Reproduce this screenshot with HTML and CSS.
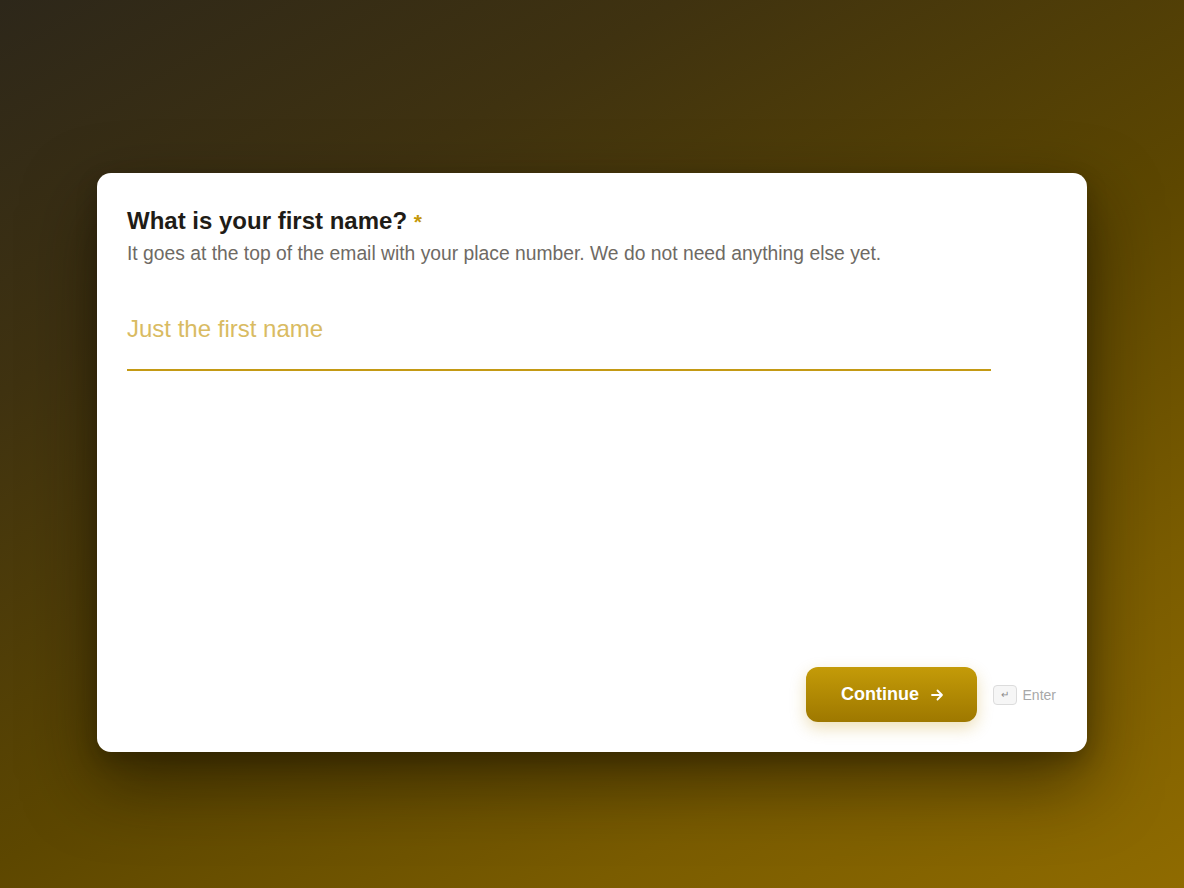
FILE: index.html
```html
<!DOCTYPE html>
<html lang="en">
<head>
<meta charset="utf-8">
<title>First name</title>
<link rel="stylesheet" href="styles.css">
</head>
<body>
<main class="stage">
  <section class="card">
    <div class="question">
      <h1 class="title">What is your first name? <span class="req">*</span></h1>
      <p class="desc">It goes at the top of the email with your place number. We do not need anything else yet.</p>
      <div class="field">
        <input class="input" type="text" placeholder="Just the first name">
      </div>
    </div>
    <div class="footer">
      <button class="btn" type="button">Continue
        <svg class="arrow" width="16" height="16" viewBox="0 0 16 16" fill="none" stroke="#fff" stroke-width="1.8" stroke-linecap="round" stroke-linejoin="round"><path d="M3 8h10M8.5 3.5 13 8l-4.5 4.5"/></svg>
      </button>
      <div class="hint"><span class="kbd">↵</span><span class="hint-text">Enter</span></div>
    </div>
  </section>
</main>
</body>
</html>
```
FILE: styles.css
```css
* { box-sizing: border-box; }
html, body { margin: 0; height: 100%; }
body {
  font-family: "Liberation Sans", Arial, sans-serif;
  background: linear-gradient(150deg, #2d271a 0%, #3f3210 25%, #5d4700 55%, #7a5c00 78%, #8f6b00 100%);
  min-height: 888px;
}
.stage {
  padding: 173px 97px 0;
}
.card {
  width: 990px;
  height: 579px;
  background: #fff;
  border-radius: 14px;
  box-shadow: 0 30px 70px rgba(20, 14, 0, 0.55), 0 8px 20px rgba(20, 14, 0, 0.25);
  display: flex;
  flex-direction: column;
  justify-content: space-between;
  padding: 33px 31px 30px 30px;
}
.title {
  margin: 0;
  font-size: 24px;
  font-weight: 700;
  color: #1f1c17;
  line-height: 30px;
}
.req { color: #c4980a; font-size: 21px; }
.desc {
  margin: 4px 0 0;
  font-size: 19.3px;
  line-height: 26px;
  color: #6e6a64;
}
.field {
  margin-top: 47px;
  width: 864px;
  border-bottom: 2px solid #c49a14;
  padding-bottom: 25px;
}
.input {
  border: 0;
  outline: none;
  width: 100%;
  padding: 0;
  font-family: inherit;
  font-size: 24px;
  line-height: 30px;
  color: #1f1c17;
  background: transparent;
}
.input::placeholder { color: #d9bb62; opacity: 1; }
.footer {
  display: flex;
  justify-content: flex-end;
  align-items: center;
  gap: 16px;
}
.btn {
  width: 171px;
  height: 55px;
  border: 0;
  border-radius: 12px;
  background: linear-gradient(180deg, #c49b08 0%, #9e7800 100%);
  color: #fff;
  font-family: inherit;
  font-weight: 700;
  font-size: 18px;
  display: flex;
  align-items: center;
  justify-content: center;
  gap: 10px;
  box-shadow: 0 6px 16px rgba(196, 150, 20, 0.3);
  padding: 0 0 0 4px;
}
.arrow { display: block; }
.hint {
  display: flex;
  align-items: center;
  gap: 6px;
}
.kbd {
  width: 24px;
  height: 20px;
  border: 1px solid #dcdcdc;
  border-radius: 4px;
  background: #f6f6f6;
  color: #8a8a8a;
  font-size: 10px;
  display: flex;
  align-items: center;
  justify-content: center;
}
.hint-text {
  color: #a8a8a8;
  font-size: 14px;
}
```
